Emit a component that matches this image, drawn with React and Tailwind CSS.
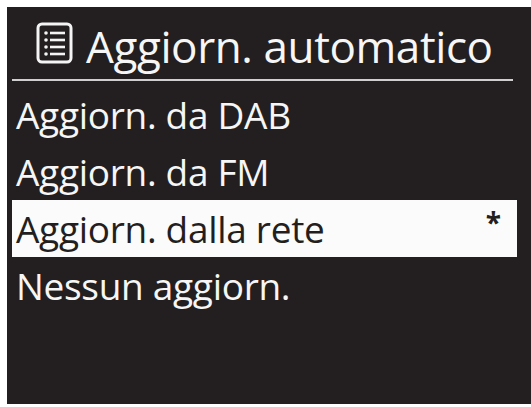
import React from "react"

const font = { fontFamily: '"Open Sans", "Noto Sans", sans-serif' }

function ListIcon() {
    return (
        <svg width="37" height="42" viewBox="0 0 37 42" fill="none" stroke="#f4f4f4">
            <rect x="2" y="2" width="33" height="38" rx="4" strokeWidth="3" />
            {[11, 18, 25, 32].map(y => (
                <g key={y}>
                    <circle cx="10" cy={y} r="1.8" fill="#f4f4f4" stroke="none" />
                    <line x1="14" y1={y} x2="29" y2={y} strokeWidth="2.6" />
                </g>
            ))}
        </svg>
    )
}

const items = [
    { label: "Aggiorn. da DAB" },
    { label: "Aggiorn. da FM" },
    { label: "Aggiorn. dalla rete", selected: true },
    { label: "Nessun aggiorn." },
]

export default function App() {
    return (
        <div className="w-[531px] h-[407px] bg-white pt-[7px] pl-[7px] pb-[3px] overflow-hidden" style={font}>
            <div className="h-[397px] bg-[#231f20] flex flex-col">
                <div className="h-[72px] flex items-center pl-[29px] gap-[13px]">
                    <ListIcon />
                    <span className="text-[44px] leading-none font-medium text-[#f6f6f6] tracking-[-0.4px] mt-[5px]">Aggiorn. automatico</span>
                </div>
                <div className="h-[2px] bg-[#cfcfcf] ml-[5px] mr-[18px]" />
                <div className="flex flex-col mt-[5px] ml-[5px] mr-[14px]">
                    {items.map(item => (
                        <div
                            key={item.label}
                            className={
                                item.selected
                                    ? "h-[57px] flex items-center justify-between pl-[4px] pr-[16px] bg-[#fbfbfb] text-[#231f20]"
                                    : "h-[57px] flex items-center justify-between pl-[4px] pr-[16px] text-[#f6f6f6]"
                            }
                        >
                            <span className="text-[37px] leading-[57px] font-medium tracking-[-0.3px]">{item.label}</span>
                            {item.selected && <span className="text-[28px] leading-none font-bold -mt-[14px]">*</span>}
                        </div>
                    ))}
                </div>
            </div>
        </div>
    )
}
